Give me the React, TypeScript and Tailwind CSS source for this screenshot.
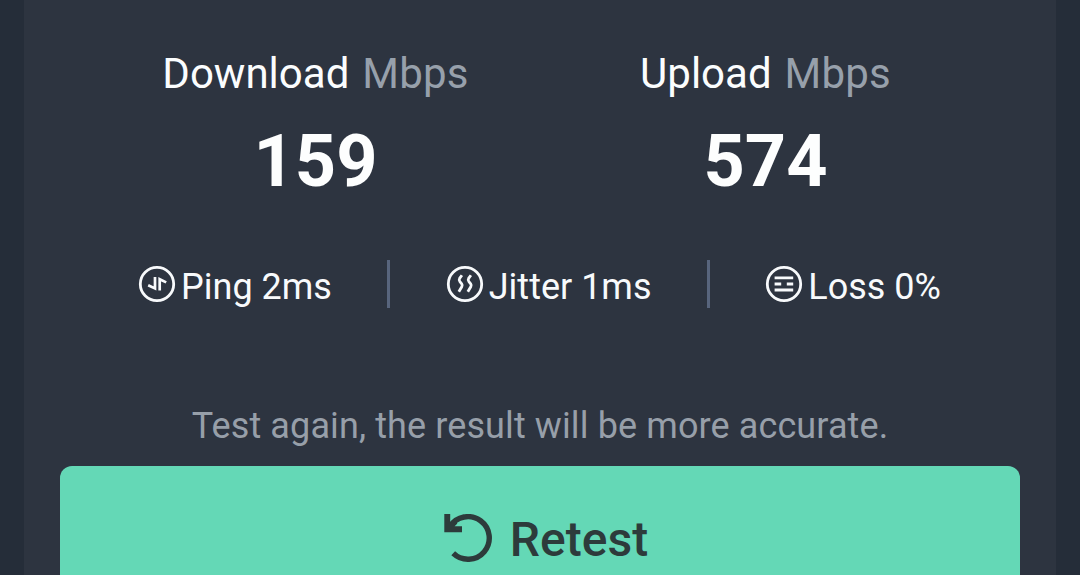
import type { ReactNode } from "react";

interface SpeedProps {
    label: string;
    value: number;
}

interface StatProps {
    icon: ReactNode;
    text: string;
}

const Speed = ({ label, value }: SpeedProps) => (
    <div className="flex flex-1 flex-col items-center">
        <div className="flex gap-[13px] pl-[1px] text-[42px] leading-[50px] text-[#fbfdfe]">
            <span>{label}</span>
            <span className="tracking-[0.2px] text-[#97a0ab]">Mbps</span>
        </div>
        <div className="mt-[21px] pl-[1px] text-[72px] leading-[84px] font-bold text-[#fdfefe]">{value}</div>
    </div>
);

const Stat = ({ icon, text }: StatProps) => (
    <div className="flex items-center gap-[5px]">
        <svg viewBox="0 0 38 38" fill="none" stroke="currentColor" className="-mt-[6px] size-[38px]">
            <circle cx="19" cy="19" r="16.7" strokeWidth="2.8" />
            {icon}
        </svg>
        <span className="text-[36px] leading-[42px] whitespace-nowrap">{text}</span>
    </div>
);

const Divider = () => <div className="-mt-[6px] h-[48px] w-[3px] bg-[#58657d]" />;

const PingIcon = <path d="M17 12v11.4L10.2 20.2M21.7 25.6V14.2L28.2 17.4" strokeWidth="2.7" />;

const JitterIcon = (
    <path
        d="M15.9 10.2l-2.3 3.2q-1 1.6.3 3.2l1.8 2.2q1 1.4.1 2.9l-3 5M24.9 10.2l-2.3 3.2q-1 1.6.3 3.2l1.8 2.2q1 1.4.1 2.9l-3 5"
        strokeWidth="2.8"
    />
);

const LossIcon = <path d="M9.6 12.9h18.6M9.6 19h6.6M21.8 19h6.4M9.6 25h18.6" strokeWidth="2.8" />;

const App = () => {
    return (
        <div className="h-[575px] overflow-hidden bg-[#252d39] px-[24px] font-[Roboto,sans-serif]">
            <div className="flex h-full flex-col bg-[#2d3440] px-[36px]">
                <div className="flex px-[30px] pt-[49px]">
                    <Speed label="Download" value={159} />
                    <Speed label="Upload" value={574} />
                </div>

                <div className="mt-[62px] flex h-[54px] items-center justify-center gap-[55.4px] pr-[1px] text-[#f8fafc]">
                    <Stat icon={PingIcon} text="Ping 2ms" />
                    <Divider />
                    <Stat icon={JitterIcon} text="Jitter 1ms" />
                    <Divider />
                    <Stat icon={LossIcon} text="Loss 0%" />
                </div>

                <p className="mt-[97px] text-center text-[36px] leading-[42px] tracking-[0.11px] text-[#979fa9]">
                    Test again, the result will be more accurate.
                </p>

                <button className="mt-[19px] flex h-[144px] shrink-0 items-center justify-center gap-[18px] rounded-[12px] bg-[#64d8b6] pl-[12px] text-[#2d3b3b]">
                    <svg viewBox="0 0 48 48" fill="none" className="size-[48px]">
                        <path d="M9.2 39.3A21.3 21.3 0 1 0 6 12.5" stroke="currentColor" strokeWidth="5.4" />
                        <path d="M.3 0h5.9v8.6l3.4-3.2 3.8 4.2-2.8 2.6H18v6H.3z" fill="currentColor" />
                    </svg>
                    <span className="mt-[4px] text-[48px] leading-[56px] font-medium">Retest</span>
                </button>
            </div>
        </div>
    );
};

export default App;
